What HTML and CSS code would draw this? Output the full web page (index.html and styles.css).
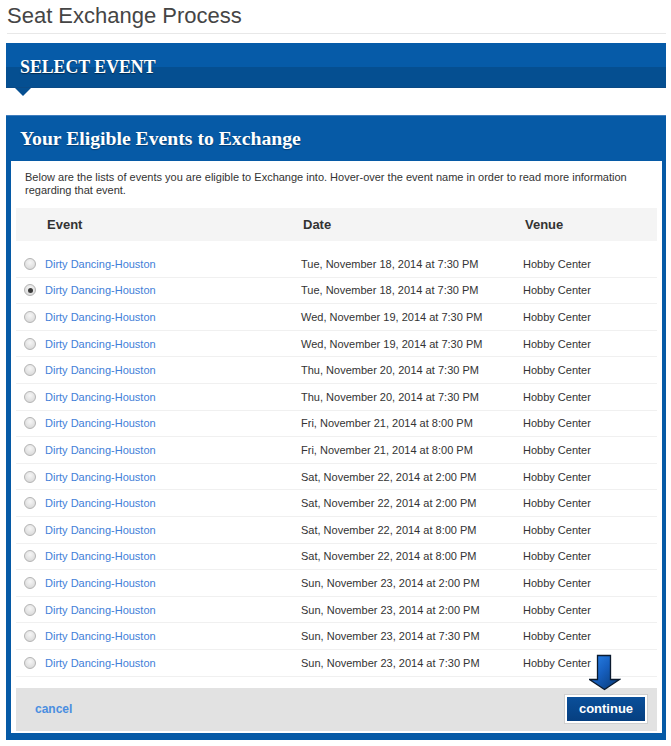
FILE: index.html
```html
<!DOCTYPE html>
<html>
<head>
<meta charset="utf-8">
<link rel="stylesheet" href="styles.css">
</head>
<body>
<div class="page">
  <h1 class="title">Seat Exchange Process</h1>
  <div class="step-bar"><span>SELECT EVENT</span></div>
  <div class="panel">
    <div class="panel-head">Your Eligible Events to Exchange</div>
    <div class="panel-body">
      <p class="desc">Below are the lists of events you are eligible to Exchange into. Hover-over the event name in order to read more information regarding that event.</p>
      <div class="thead">
        <div class="th th-event">Event</div>
        <div class="th">Date</div>
        <div class="th">Venue</div>
      </div>
      <div class="rows">
        <div class="row"><div class="cell cell-event"><span class="radio"></span><a class="ev">Dirty Dancing-Houston</a></div><div class="cell">Tue, November 18, 2014 at 7:30 PM</div><div class="cell">Hobby Center</div></div>
        <div class="row"><div class="cell cell-event"><span class="radio checked"></span><a class="ev">Dirty Dancing-Houston</a></div><div class="cell">Tue, November 18, 2014 at 7:30 PM</div><div class="cell">Hobby Center</div></div>
        <div class="row"><div class="cell cell-event"><span class="radio"></span><a class="ev">Dirty Dancing-Houston</a></div><div class="cell">Wed, November 19, 2014 at 7:30 PM</div><div class="cell">Hobby Center</div></div>
        <div class="row"><div class="cell cell-event"><span class="radio"></span><a class="ev">Dirty Dancing-Houston</a></div><div class="cell">Wed, November 19, 2014 at 7:30 PM</div><div class="cell">Hobby Center</div></div>
        <div class="row"><div class="cell cell-event"><span class="radio"></span><a class="ev">Dirty Dancing-Houston</a></div><div class="cell">Thu, November 20, 2014 at 7:30 PM</div><div class="cell">Hobby Center</div></div>
        <div class="row"><div class="cell cell-event"><span class="radio"></span><a class="ev">Dirty Dancing-Houston</a></div><div class="cell">Thu, November 20, 2014 at 7:30 PM</div><div class="cell">Hobby Center</div></div>
        <div class="row"><div class="cell cell-event"><span class="radio"></span><a class="ev">Dirty Dancing-Houston</a></div><div class="cell">Fri, November 21, 2014 at 8:00 PM</div><div class="cell">Hobby Center</div></div>
        <div class="row"><div class="cell cell-event"><span class="radio"></span><a class="ev">Dirty Dancing-Houston</a></div><div class="cell">Fri, November 21, 2014 at 8:00 PM</div><div class="cell">Hobby Center</div></div>
        <div class="row"><div class="cell cell-event"><span class="radio"></span><a class="ev">Dirty Dancing-Houston</a></div><div class="cell">Sat, November 22, 2014 at 2:00 PM</div><div class="cell">Hobby Center</div></div>
        <div class="row"><div class="cell cell-event"><span class="radio"></span><a class="ev">Dirty Dancing-Houston</a></div><div class="cell">Sat, November 22, 2014 at 2:00 PM</div><div class="cell">Hobby Center</div></div>
        <div class="row"><div class="cell cell-event"><span class="radio"></span><a class="ev">Dirty Dancing-Houston</a></div><div class="cell">Sat, November 22, 2014 at 8:00 PM</div><div class="cell">Hobby Center</div></div>
        <div class="row"><div class="cell cell-event"><span class="radio"></span><a class="ev">Dirty Dancing-Houston</a></div><div class="cell">Sat, November 22, 2014 at 8:00 PM</div><div class="cell">Hobby Center</div></div>
        <div class="row"><div class="cell cell-event"><span class="radio"></span><a class="ev">Dirty Dancing-Houston</a></div><div class="cell">Sun, November 23, 2014 at 2:00 PM</div><div class="cell">Hobby Center</div></div>
        <div class="row"><div class="cell cell-event"><span class="radio"></span><a class="ev">Dirty Dancing-Houston</a></div><div class="cell">Sun, November 23, 2014 at 2:00 PM</div><div class="cell">Hobby Center</div></div>
        <div class="row"><div class="cell cell-event"><span class="radio"></span><a class="ev">Dirty Dancing-Houston</a></div><div class="cell">Sun, November 23, 2014 at 7:30 PM</div><div class="cell">Hobby Center</div></div>
        <div class="row"><div class="cell cell-event"><span class="radio"></span><a class="ev">Dirty Dancing-Houston</a></div><div class="cell">Sun, November 23, 2014 at 7:30 PM</div><div class="cell">Hobby Center</div></div>
      </div>
      <div class="footer">
        <a class="cancel">cancel</a>
        <div class="btn-wrap">
          <svg class="arrow" width="32" height="37" viewBox="0 0 32 37">
            <defs>
              <linearGradient id="ag" x1="0" y1="0" x2="1" y2="1">
                <stop offset="0" stop-color="#2a86ee"/>
                <stop offset="0.45" stop-color="#1760c0"/>
                <stop offset="1" stop-color="#06356e"/>
              </linearGradient>
            </defs>
            <path d="M8.5 1.5 H21.5 V25.5 H30.5 L15.5 35.5 L0.5 25.5 H8.5 Z" fill="url(#ag)" stroke="#0b1a2e" stroke-width="1.3" stroke-linejoin="miter"/>
          </svg>
          <a class="continue">continue</a>
        </div>
      </div>
    </div>
  </div>
</div>
</body>
</html>
```
FILE: styles.css
```css
* { box-sizing: border-box; }
body {
  margin: 0;
  background: #fff;
  font-family: "Liberation Sans", Arial, sans-serif;
  color: #333;
}
.page {
  width: 671px;
  padding: 0 5px 0 6px;
}
.title {
  margin: 0 0 0 1px;
  height: 34px;
  padding-top: 3px;
  font-size: 22px;
  font-weight: normal;
  line-height: 26px;
  color: #454545;
  border-bottom: 1px solid #e8e8e8;
}
.step-bar {
  position: relative;
  margin-top: 9px;
  height: 45px;
  background: linear-gradient(#065ba8 0, #065ba8 24px, #054f91 24px, #054f91 44px, #0b4a85 44px);
  padding: 14px 0 0 14px;
  font-family: "Liberation Serif", "Times New Roman", serif;
  font-weight: bold;
  font-size: 17.8px;
  line-height: 21px;
  color: #fff;
  text-shadow: 0 1px 1px rgba(0,0,0,0.45);
}
.step-bar::after {
  content: "";
  position: absolute;
  left: 9px;
  top: 45px;
  border-left: 8px solid transparent;
  border-right: 8px solid transparent;
  border-top: 8px solid #054f91;
}
.panel {
  margin-top: 27px;
  background: #065aa6;
  border-top: 1px solid #3f7dbd;
  padding: 0 4px 7px 5px;
}
.panel-head {
  height: 45px;
  padding: 11px 0 0 9px;
  font-family: "Liberation Serif", "Times New Roman", serif;
  font-weight: bold;
  font-size: 19.7px;
  line-height: 23px;
  color: #fff;
  text-shadow: 0 1px 1px rgba(0,0,0,0.35);
}
.panel-body {
  background: #fff;
  padding: 10px 5px 2px 5px;
}
.desc {
  margin: 0 0 10px 9px;
  font-size: 11px;
  line-height: 13px;
  color: #333;
  height: 27px;
}
.thead, .row {
  display: grid;
  grid-template-columns: 285px 222px 1fr;
}
.thead {
  background: #f4f4f4;
  height: 33px;
  align-items: center;
}
.th {
  font-size: 13px;
  font-weight: bold;
  color: #333;
  padding-left: 2px;
}
.th-event { padding-left: 31px; }
.rows { margin-top: 10px; }
.row {
  height: 26.6px;
  align-items: center;
  border-bottom: 1px solid #f0f0f0;
  font-size: 11px;
}
.cell { color: #333; }
.cell-event {
  display: flex;
  align-items: center;
  padding-left: 8px;
}
.radio {
  width: 12px;
  height: 12px;
  border-radius: 50%;
  border: 1px solid #b4b4b4;
  background: radial-gradient(circle at 50% 35%, #f6f6f6 0, #dedede 70%, #d0d0d0 100%);
  margin-right: 9px;
  display: flex;
  align-items: center;
  justify-content: center;
}
.radio.checked::after {
  content: "";
  width: 5px;
  height: 5px;
  border-radius: 50%;
  background: #3a3a3a;
}
.ev {
  color: #3f80d8;
  text-decoration: none;
}
.footer {
  margin-top: 11px;
  height: 43px;
  background: #e2e2e2;
  display: flex;
  align-items: center;
  justify-content: space-between;
  padding: 0 10px 0 19px;
}
.cancel {
  font-size: 12px;
  font-weight: bold;
  color: #4a8ee0;
}
.btn-wrap { position: relative; }
.continue {
  display: block;
  width: 82px;
  height: 28px;
  border: 2px solid #fff;
  box-shadow: 0 0 0 1px #cfcfcf;
  background: linear-gradient(#0a4f9a, #063f80);
  color: #fff;
  font-size: 13px;
  font-weight: bold;
  line-height: 24px;
  text-align: center;
}
.arrow {
  position: absolute;
  left: 24px;
  top: -41px;
}
```
